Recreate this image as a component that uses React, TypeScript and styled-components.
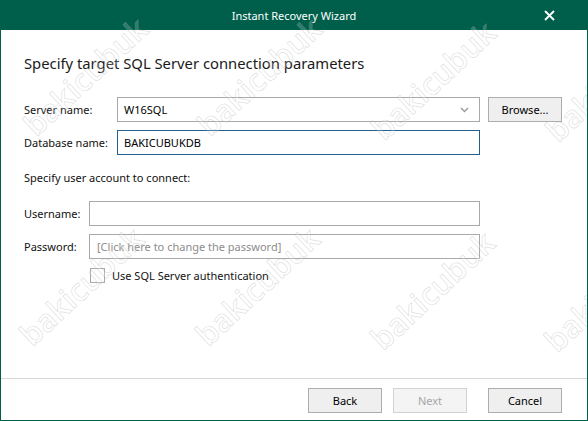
import React from "react";
import styled, { createGlobalStyle } from "styled-components";

const GlobalStyle = createGlobalStyle`
  html, body {
    margin: 0;
    padding: 0;
    background: #ffffff;
  }
  body {
    font-family: "Noto Sans", "Open Sans", sans-serif;
    color: #1a1a1a;
  }
`;

const Window = styled.div`
  position: relative;
  width: 588px;
  height: 421px;
  box-sizing: border-box;
  border: 1px solid #005f4b;
  border-top: none;
  display: flex;
  flex-direction: column;
  background: #fff;
  overflow: hidden;
`;

const TitleBar = styled.div`
  height: 30px;
  flex-shrink: 0;
  background: #005f4b;
  display: grid;
  grid-template-columns: 1fr auto 1fr;
  align-items: center;
`;

const Title = styled.div`
  grid-column: 2;
  color: #ffffff;
  font-size: 11px;
`;

const CloseButton = styled.div`
  grid-column: 3;
  justify-self: end;
  margin-right: 23px;
  width: 30px;
  height: 30px;
  display: flex;
  align-items: center;
  justify-content: center;
`;

const Body = styled.div`
  flex: 1;
  padding: 22px 0 0 23px;
`;

const Heading = styled.h1`
  margin: 0;
  font-size: 14.8px;
  line-height: 22px;
  font-weight: 400;
  color: #1a1a1a;
`;

const Group = styled.div<{ $top: number }>`
  margin-top: ${(p) => p.$top}px;
  display: flex;
  flex-direction: column;
  gap: 8px;
`;

const Row = styled.div`
  display: flex;
  align-items: center;
  height: 25px;
`;

const Label = styled.label<{ $width: number }>`
  width: ${(p) => p.$width}px;
  flex-shrink: 0;
  font-size: 11px;
  color: #111;
`;

const Field = styled.div<{ $width: number; $focused?: boolean }>`
  width: ${(p) => p.$width}px;
  height: 25px;
  box-sizing: border-box;
  border: 1px solid ${(p) => (p.$focused ? "#24608e" : "#a9a9a9")};
  background: #fff;
  display: flex;
  align-items: center;
  justify-content: space-between;
  padding: 0 10px 0 6px;
  font-size: 11px;
  color: #000;
`;

const Placeholder = styled.span`
  color: #8c8c8c;
  padding-left: 1px;
`;

const Button = styled.div<{ $disabled?: boolean; $gap?: number }>`
  width: 74px;
  height: 25px;
  box-sizing: border-box;
  margin-left: ${(p) => p.$gap ?? 0}px;
  border: 1px solid ${(p) => (p.$disabled ? "#d2d2d2" : "#adadad")};
  background: ${(p) => (p.$disabled ? "#f4f4f4" : "#efefef")};
  color: ${(p) => (p.$disabled ? "#a6a6a6" : "#000")};
  font-size: 11px;
  display: flex;
  align-items: center;
  justify-content: center;
`;

const SectionText = styled.div`
  margin-top: 15px;
  font-size: 11px;
  line-height: 16px;
  color: #111;
`;

const CheckRow = styled.div`
  margin: 9px 0 0 66px;
  display: flex;
  align-items: center;
  gap: 7px;
  font-size: 11px;
  color: #111;
`;

const CheckBox = styled.div`
  width: 15px;
  height: 15px;
  box-sizing: border-box;
  border: 1px solid #a9a9a9;
  background: #fff;
`;

const Footer = styled.div`
  height: 42px;
  box-sizing: border-box;
  flex-shrink: 0;
  border-top: 1px solid #d6d6d6;
  display: flex;
  justify-content: flex-end;
  padding: 9px 25px 0 0;
`;

const Watermarks = styled.div`
  position: absolute;
  inset: 0;
  pointer-events: none;
  overflow: hidden;
`;

const Mark = styled.span`
  position: absolute;
  transform: translate(-50%, -50%) rotate(-43deg);
  font-family: "Open Sans", sans-serif;
  font-weight: 600;
  font-size: 31px;
  white-space: nowrap;
  color: rgba(255, 255, 255, 0.2);
  -webkit-text-stroke: 0.7px rgba(160, 160, 160, 0.35);
`;

const marks = [
  [84, 76], [258, 76], [432, 80], [606, 82],
  [80, 286], [256, 286], [431, 290], [605, 292],
];

const Chevron = () => (
  <svg width="9" height="6" viewBox="0 0 9 6">
    <path d="M1 1 L4.5 4.5 L8 1" fill="none" stroke="#9a9a9a" strokeWidth="1.4" />
  </svg>
);

const CloseIcon = () => (
  <svg width="11" height="11" viewBox="0 0 11 11">
    <path d="M1 1 L10 10 M10 1 L1 10" stroke="#fff" strokeWidth="1.8" />
  </svg>
);

export default function App() {
  return (
    <>
      <GlobalStyle />
      <Window>
        <TitleBar>
          <Title>Instant Recovery Wizard</Title>
          <CloseButton>
            <CloseIcon />
          </CloseButton>
        </TitleBar>
        <Body>
          <Heading>Specify target SQL Server connection parameters</Heading>
          <Group $top={23}>
            <Row>
              <Label $width={93}>Server name:</Label>
              <Field $width={363}>
                <span>W16SQL</span>
                <Chevron />
              </Field>
              <Button $gap={8}>Browse...</Button>
            </Row>
            <Row>
              <Label $width={93}>Database name:</Label>
              <Field $width={363} $focused>
                <span>BAKICUBUKDB</span>
              </Field>
            </Row>
          </Group>
          <SectionText>Specify user account to connect:</SectionText>
          <Group $top={15}>
            <Row>
              <Label $width={65}>Username:</Label>
              <Field $width={391} />
            </Row>
            <Row>
              <Label $width={65}>Password:</Label>
              <Field $width={391}>
                <Placeholder>[Click here to change the password]</Placeholder>
              </Field>
            </Row>
          </Group>
          <CheckRow>
            <CheckBox />
            <span>Use SQL Server authentication</span>
          </CheckRow>
        </Body>
        <Footer>
          <Button>Back</Button>
          <Button $gap={11} $disabled>
            Next
          </Button>
          <Button $gap={21}>Cancel</Button>
        </Footer>
        <Watermarks>
          {marks.map(([x, y], i) => (
            <Mark key={i} style={{ left: x, top: y }}>
              bakicubuk
            </Mark>
          ))}
        </Watermarks>
      </Window>
    </>
  );
}
